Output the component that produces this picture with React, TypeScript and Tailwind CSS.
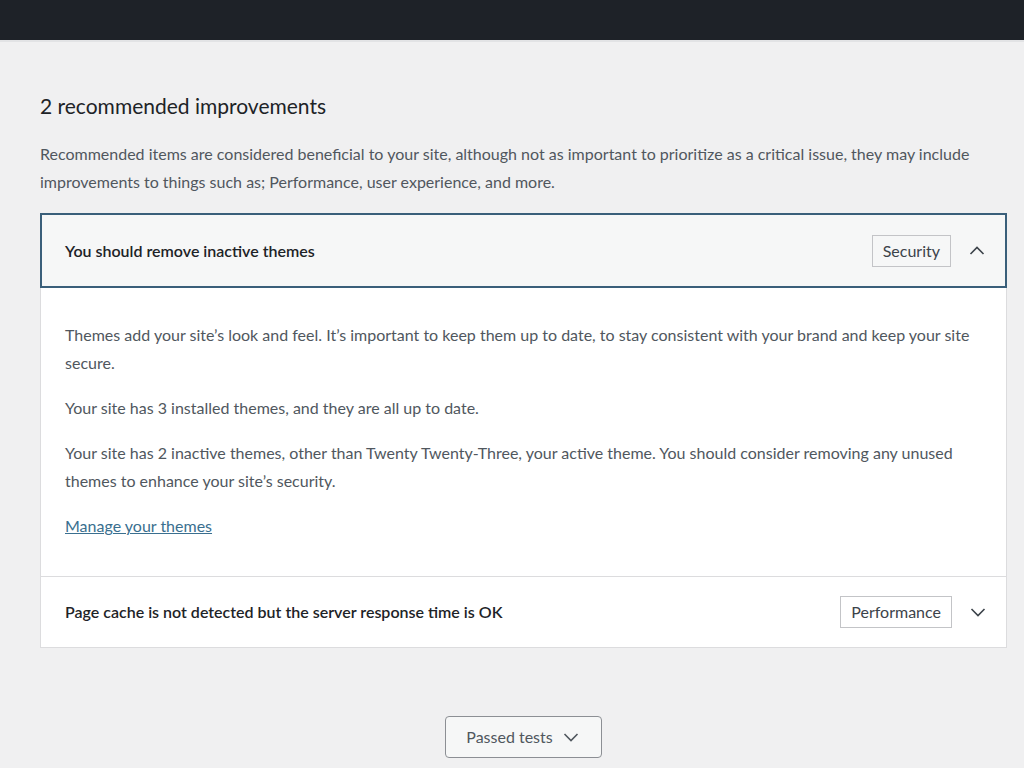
import React from "react";

const Up = () => (
  <svg width="20" height="20" viewBox="0 0 20 20" fill="none" stroke="#3c434a" strokeWidth="1.6">
    <path d="M3.5 13 L10 6.5 L16.5 13" />
  </svg>
);
const Down = ({ c = "#3c434a" }: { c?: string }) => (
  <svg width="20" height="20" viewBox="0 0 20 20" fill="none" stroke={c} strokeWidth="1.6">
    <path d="M3.5 7 L10 13.5 L16.5 7" />
  </svg>
);

export default function App() {
  return (
    <div className="min-h-[768px] w-[1024px] bg-[#f0f0f1] text-[#3c434a] overflow-hidden" style={{ fontFamily: "Lato, 'Noto Sans', sans-serif" }}>
      <div className="h-[40px] bg-[#1e2228]" />
      <div className="h-[2px] bg-[#e2e3e5]" />
      <div className="px-[40px] pr-[17px]">
        <h2 className="mt-[50px] text-[21px] leading-[27px] text-[#1d2327]">2 recommended improvements</h2>
        <p className="mt-[21px] text-[16px] leading-[28px] text-[#50575e]">
          <span className="block whitespace-nowrap">Recommended items are considered beneficial to your site, although not as important to prioritize as a critical issue, they may include</span>
          <span className="block whitespace-nowrap">improvements to things such as; Performance, user experience, and more.</span>
        </p>
        <div className="mt-[17px] bg-white border border-[#dcdcde]">
          <div className="-m-px h-[75px] border-2 border-[#3a5f7a] bg-[#f6f7f7] flex items-center pl-[23px] pr-[18px]">
            <div className="flex-1 text-[16px] font-semibold text-[#1d2327]">You should remove inactive themes</div>
            <span className="h-[32px] px-[10px] border border-[#c3c4c7] flex items-center text-[16px] text-[#3c434a]">Security</span>
            <span className="ml-[16px] w-[20px] flex justify-center"><Up /></span>
          </div>
          <div className="px-[24px] pt-[34px] pb-[36px] text-[16px] leading-[28px] text-[#50575e] border-b border-[#dcdcde]">
            <p>
              <span className="block whitespace-nowrap">Themes add your site’s look and feel. It’s important to keep them up to date, to stay consistent with your brand and keep your site</span>
              <span className="block">secure.</span>
            </p>
            <p className="mt-[17px]">Your site has 3 installed themes, and they are all up to date.</p>
            <p className="mt-[17px]">
              <span className="block whitespace-nowrap">Your site has 2 inactive themes, other than Twenty Twenty-Three, your active theme. You should consider removing any unused</span>
              <span className="block">themes to enhance your site’s security.</span>
            </p>
            <p className="mt-[17px]"><a className="underline text-[#3a6f8f]" href="#">Manage your themes</a></p>
          </div>
          <div className="h-[70px] flex items-center pl-[24px] pr-[18px]">
            <div className="flex-1 text-[16px] font-semibold text-[#1d2327]">Page cache is not detected but the server response time is OK</div>
            <span className="h-[32px] px-[10px] border border-[#c3c4c7] flex items-center text-[16px] text-[#3c434a]">Performance</span>
            <span className="ml-[16px] w-[20px] flex justify-center"><Down /></span>
          </div>
        </div>
        <div className="mt-[68px] flex justify-center">
          <button className="h-[42px] w-[157px] border border-[#8c8f94] rounded-[4px] bg-[#f6f7f7] flex items-center justify-center gap-[8px] text-[16px] text-[#50575e]">
            Passed tests <Down c="#50575e" />
          </button>
        </div>
      </div>
    </div>
  );
}
